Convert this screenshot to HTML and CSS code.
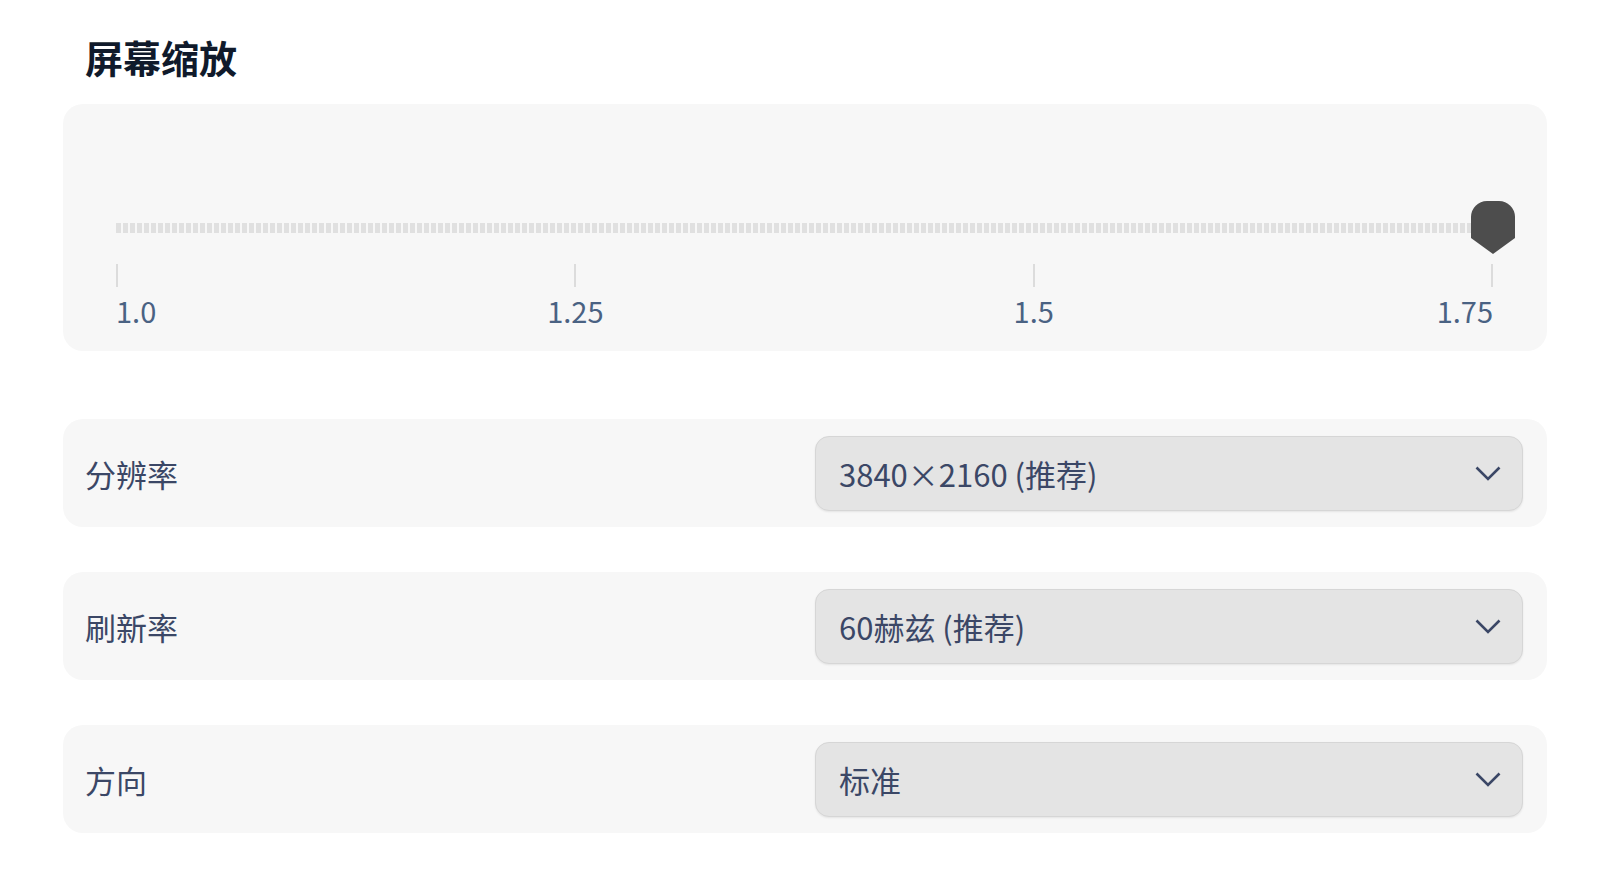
FILE: index.html
```html
<!DOCTYPE html>
<html lang="zh-CN">
<head>
<meta charset="utf-8">
<title>屏幕缩放</title>
<link rel="stylesheet" href="styles.css">
</head>
<body>
<main class="page">
  <h1 class="title">屏幕缩放</h1>

  <section class="scale-card">
    <div class="slider">
      <div class="track"></div>
      <svg class="thumb" width="44" height="53" viewBox="0 0 44 53" aria-hidden="true">
        <path d="M0 16 A16 16 0 0 1 16 0 H28 A16 16 0 0 1 44 16 V37 L22 53 L0 37 Z" fill="#4d4d4d"/>
      </svg>
    </div>
    <div class="ticks">
      <div class="tick tick-start"><span class="tick-mark"></span><span class="tick-label">1.0</span></div>
      <div class="tick"><span class="tick-mark"></span><span class="tick-label">1.25</span></div>
      <div class="tick"><span class="tick-mark"></span><span class="tick-label">1.5</span></div>
      <div class="tick tick-end"><span class="tick-mark"></span><span class="tick-label">1.75</span></div>
    </div>
  </section>

  <div class="rows">
    <section class="row-card">
      <span class="row-label">分辨率</span>
      <div class="select">
        <span class="select-value">3840×2160 (推荐)</span>
        <svg class="chevron" width="26" height="15" viewBox="0 0 26 15" aria-hidden="true"><polyline points="1.5,1.5 13,13 24.5,1.5" fill="none" stroke="#3b4766" stroke-width="2.6"/></svg>
      </div>
    </section>
    <section class="row-card">
      <span class="row-label">刷新率</span>
      <div class="select">
        <span class="select-value">60赫兹 (推荐)</span>
        <svg class="chevron" width="26" height="15" viewBox="0 0 26 15" aria-hidden="true"><polyline points="1.5,1.5 13,13 24.5,1.5" fill="none" stroke="#3b4766" stroke-width="2.6"/></svg>
      </div>
    </section>
    <section class="row-card">
      <span class="row-label">方向</span>
      <div class="select">
        <span class="select-value">标准</span>
        <svg class="chevron" width="26" height="15" viewBox="0 0 26 15" aria-hidden="true"><polyline points="1.5,1.5 13,13 24.5,1.5" fill="none" stroke="#3b4766" stroke-width="2.6"/></svg>
      </div>
    </section>
  </div>
</main>
</body>
</html>
```

FILE: styles.css
```css
* { box-sizing: border-box; }

html, body {
  margin: 0;
  padding: 0;
  background: #ffffff;
}

body {
  font-family: "Noto Sans CJK SC", "Noto Sans", sans-serif;
  color: #3b4766;
}

.page {
  width: 1484px;
  margin-left: 63px;
  padding-top: 38px;
}

.title {
  margin: 0 0 28px 22px;
  font-size: 38px;
  line-height: 1;
  font-weight: 700;
  color: #101a2b;
}

.scale-card {
  height: 247px;
  background: #f7f7f7;
  border-radius: 20px;
  padding: 97px 54px 0 53px;
}

.slider {
  position: relative;
  height: 53px;
  display: flex;
  align-items: center;
}

.track {
  width: 100%;
  height: 10px;
  margin-top: 1px;
  background: repeating-linear-gradient(90deg, #e0e0e0 0 5px, transparent 5px 7px);
}

.thumb {
  position: absolute;
  right: -22px;
  top: 0;
  display: block;
}

.ticks {
  margin-top: 10px;
  display: flex;
  justify-content: space-between;
}

.tick {
  width: 2px;
  display: flex;
  flex-direction: column;
  align-items: center;
}

.tick-start { align-items: flex-start; }
.tick-end { align-items: flex-end; }

.tick-mark {
  display: block;
  width: 2px;
  height: 23px;
  background: #dcdcdc;
}

.tick-label {
  margin-top: 9px;
  font-size: 29px;
  line-height: 1;
  white-space: nowrap;
  color: #4a6283;
}

.rows {
  margin-top: 68px;
  display: flex;
  flex-direction: column;
  gap: 45px;
}

.row-card {
  height: 108px;
  background: #f7f7f7;
  border-radius: 20px;
  padding: 0 24px;
  display: grid;
  grid-template-columns: 1fr 1fr;
  column-gap: 20px;
  align-items: center;
}

.row-label {
  margin-left: -2px;
  font-size: 31px;
  line-height: 1;
  color: #3b4766;
}

.select {
  height: 75px;
  background: #e4e4e4;
  border: 1.5px solid #d6d6d6;
  border-radius: 14px;
  box-shadow: 0 1px 2px rgba(0, 0, 0, 0.08);
  padding: 0 21px 0 23px;
  display: flex;
  align-items: center;
  justify-content: space-between;
}

.select-value {
  font-size: 31px;
  line-height: 1;
  color: #3b4766;
}

.chevron { display: block; }
```
